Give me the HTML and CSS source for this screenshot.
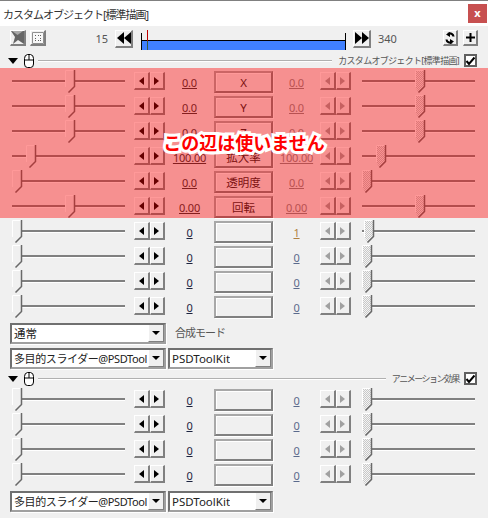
FILE: index.html
```html
<!DOCTYPE html>
<html lang="ja">

<head>
    <meta charset="UTF-8">
    <title>カスタムオブジェクト[標準描画]</title>
    <link rel="stylesheet" href="styles.css">
</head>

<body>
    <svg class="defs" width="0" height="0">
        <pattern id="dots" width="2" height="2" patternUnits="userSpaceOnUse">
            <rect width="2" height="2" fill="#f4f4f4"/>
            <rect width="1" height="1" fill="#c8c8c8"/>
            <rect x="1" y="1" width="1" height="1" fill="#c8c8c8"/>
        </pattern>
        <symbol id="thumb" viewBox="0 0 11 23">
            <path d="M1 .5H9.500V16.500L3.500 22.500L.5 17.500V.5Z" fill="#f0f0f0"/>
            <path d="M.5 17V.5H9" fill="none" stroke="#fff"/>
            <path d="M9.500 0V16.500L3.500 22.500" fill="none" stroke="#696969" stroke-width="1.500"/>
        </symbol>
        <symbol id="thumb-off" viewBox="0 0 11 23">
            <path d="M1 .5H9.500V16.500L3.500 22.500L.5 17.500V.5Z" fill="url(#dots)"/>
            <path d="M.5 17V.5H9" fill="none" stroke="#fff"/>
            <path d="M9.500 0V16.500L3.500 22.500" fill="none" stroke="#696969" stroke-width="1.500"/>
        </symbol>
        <symbol id="mouse" viewBox="0 0 10 14">
            <path d="M.5 4.500Q.5 1 3.500 .5H6.500Q9.500 1 9.500 4.500V10Q9.500 13.500 6.500 13.500H3.500Q.5 13.500 .5 10ZM.5 6H9.500M5 .5V6" fill="#fff" stroke="#000"/>
        </symbol>
    </svg>

    <div class="window">
        <div class="titlebar">
            <span class="title">カスタムオブジェクト[標準描画]</span>
            <span class="close">x</span>
        </div>

        <div class="toolbar">
            <button class="btn tool-btn">
                <svg width="13" height="13" viewBox="0 0 13 13"><path d="M0 0H13V13L7 9L2 13L4 6Z" fill="#666"/><path d="M1 0L6.500 4L12 0Z" fill="#aaa"/></svg>
            </button>
            <button class="btn tool-btn gap">
                <svg width="12" height="12" viewBox="0 0 12 12"><path d="M.5 .5H11.500V11.500H.5Z" fill="#f8f8f8" stroke="#909090"/><path d="M3 3H4V4H3ZM6 3H7V4H6ZM8 3H9V4H8ZM3 6H4V7H3ZM8 6H9V7H8ZM3 8H4V9H3ZM6 8H7V9H6ZM8 8H9V9H8Z" fill="#606060"/></svg>
            </button>
            <span class="frame frame-start">15</span>
            <button class="btn seek seek-back"><i class="tri-l"></i><i class="tri-l"></i></button>
            <div class="timeline">
                <div class="timeline-bar"></div>
                <div class="timeline-cursor"></div>
            </div>
            <button class="btn seek seek-next"><i class="tri-r"></i><i class="tri-r"></i></button>
            <span class="frame frame-end">340</span>
            <button class="btn tool-btn small">
                <svg width="10" height="12" viewBox="0 0 10 12"><path d="M8.500 4.500A3.500 3.500 0 0 0 3 2M1.500 7.500A3.500 3.500 0 0 0 7 10" fill="none" stroke="#000" stroke-width="2.200"/><path d="M5 0V5L1 2.500ZM5 7V12L9 9.500Z"/></svg>
            </button>
            <button class="btn tool-btn small gap-wide">
                <svg width="9" height="9" viewBox="0 0 9 9"><path d="M3.500 0H5.500V3.500H9V5.500H5.500V9H3.500V5.500H0V3.500H3.500Z"/></svg>
            </button>
        </div>

        <div class="section-head">
            <i class="tri-d"></i>
            <svg class="mouse" width="10" height="14"><use href="#mouse"/></svg>
            <span class="section-line"></span>
            <span class="section-name">カスタムオブジェクト[標準描画]</span>
            <span class="check">
                <svg width="11" height="10" viewBox="0 0 11 10"><path d="M1.500 5L4 8L9.500 1.500" fill="none" stroke="#000" stroke-width="2"/></svg>
            </span>
        </div>

        <div class="row">
            <div class="slider"><svg class="thumb" style="left:53px" width="11" height="23"><use href="#thumb"/></svg></div>
            <div class="spin"><button class="btn"><i class="arr-l"></i></button><button class="btn"><i class="arr-r"></i></button></div>
            <a class="val">0.0</a>
            <button class="btn name">X</button>
            <a class="val val-r">0.0</a>
            <div class="spin off"><button class="btn"><i class="arr-l"></i></button><button class="btn"><i class="arr-r"></i></button></div>
            <div class="slider"><svg class="thumb" style="left:53px" width="11" height="23"><use href="#thumb-off"/></svg></div>
        </div>
        <div class="row">
            <div class="slider"><svg class="thumb" style="left:53px" width="11" height="23"><use href="#thumb"/></svg></div>
            <div class="spin"><button class="btn"><i class="arr-l"></i></button><button class="btn"><i class="arr-r"></i></button></div>
            <a class="val">0.0</a>
            <button class="btn name">Y</button>
            <a class="val val-r">0.0</a>
            <div class="spin off"><button class="btn"><i class="arr-l"></i></button><button class="btn"><i class="arr-r"></i></button></div>
            <div class="slider"><svg class="thumb" style="left:53px" width="11" height="23"><use href="#thumb-off"/></svg></div>
        </div>
        <div class="row">
            <div class="slider"><svg class="thumb" style="left:53px" width="11" height="23"><use href="#thumb"/></svg></div>
            <div class="spin"><button class="btn"><i class="arr-l"></i></button><button class="btn"><i class="arr-r"></i></button></div>
            <a class="val">0.0</a>
            <button class="btn name">Z</button>
            <a class="val val-r">0.0</a>
            <div class="spin off"><button class="btn"><i class="arr-l"></i></button><button class="btn"><i class="arr-r"></i></button></div>
            <div class="slider"><svg class="thumb" style="left:53px" width="11" height="23"><use href="#thumb-off"/></svg></div>
        </div>
        <div class="row">
            <div class="slider"><svg class="thumb" style="left:14px" width="11" height="23"><use href="#thumb"/></svg></div>
            <div class="spin"><button class="btn"><i class="arr-l"></i></button><button class="btn"><i class="arr-r"></i></button></div>
            <a class="val">100.00</a>
            <button class="btn name">拡大率</button>
            <a class="val val-r">100.00</a>
            <div class="spin off"><button class="btn"><i class="arr-l"></i></button><button class="btn"><i class="arr-r"></i></button></div>
            <div class="slider"><svg class="thumb" style="left:14px" width="11" height="23"><use href="#thumb-off"/></svg></div>
        </div>
        <div class="row">
            <div class="slider"><svg class="thumb" style="left:0" width="11" height="23"><use href="#thumb"/></svg></div>
            <div class="spin"><button class="btn"><i class="arr-l"></i></button><button class="btn"><i class="arr-r"></i></button></div>
            <a class="val">0.0</a>
            <button class="btn name">透明度</button>
            <a class="val val-r">0.0</a>
            <div class="spin off"><button class="btn"><i class="arr-l"></i></button><button class="btn"><i class="arr-r"></i></button></div>
            <div class="slider"><svg class="thumb" style="left:0" width="11" height="23"><use href="#thumb-off"/></svg></div>
        </div>
        <div class="row">
            <div class="slider"><svg class="thumb" style="left:53px" width="11" height="23"><use href="#thumb"/></svg></div>
            <div class="spin"><button class="btn"><i class="arr-l"></i></button><button class="btn"><i class="arr-r"></i></button></div>
            <a class="val">0.00</a>
            <button class="btn name">回転</button>
            <a class="val val-r">0.00</a>
            <div class="spin off"><button class="btn"><i class="arr-l"></i></button><button class="btn"><i class="arr-r"></i></button></div>
            <div class="slider"><svg class="thumb" style="left:53px" width="11" height="23"><use href="#thumb-off"/></svg></div>
        </div>
        <div class="row">
            <div class="slider"><svg class="thumb" style="left:0" width="11" height="23"><use href="#thumb"/></svg></div>
            <div class="spin"><button class="btn"><i class="arr-l"></i></button><button class="btn"><i class="arr-r"></i></button></div>
            <a class="val val-link">0</a>
            <button class="btn name"></button>
            <a class="val val-one">1</a>
            <div class="spin off"><button class="btn"><i class="arr-l"></i></button><button class="btn"><i class="arr-r"></i></button></div>
            <div class="slider"><svg class="thumb" style="left:2px" width="11" height="23"><use href="#thumb-off"/></svg></div>
        </div>
        <div class="row">
            <div class="slider"><svg class="thumb" style="left:0" width="11" height="23"><use href="#thumb"/></svg></div>
            <div class="spin"><button class="btn"><i class="arr-l"></i></button><button class="btn"><i class="arr-r"></i></button></div>
            <a class="val val-link">0</a>
            <button class="btn name"></button>
            <a class="val val-link-r">0</a>
            <div class="spin off"><button class="btn"><i class="arr-l"></i></button><button class="btn"><i class="arr-r"></i></button></div>
            <div class="slider"><svg class="thumb" style="left:0" width="11" height="23"><use href="#thumb-off"/></svg></div>
        </div>
        <div class="row">
            <div class="slider"><svg class="thumb" style="left:0" width="11" height="23"><use href="#thumb"/></svg></div>
            <div class="spin"><button class="btn"><i class="arr-l"></i></button><button class="btn"><i class="arr-r"></i></button></div>
            <a class="val val-link">0</a>
            <button class="btn name"></button>
            <a class="val val-link-r">0</a>
            <div class="spin off"><button class="btn"><i class="arr-l"></i></button><button class="btn"><i class="arr-r"></i></button></div>
            <div class="slider"><svg class="thumb" style="left:0" width="11" height="23"><use href="#thumb-off"/></svg></div>
        </div>
        <div class="row">
            <div class="slider"><svg class="thumb" style="left:0" width="11" height="23"><use href="#thumb"/></svg></div>
            <div class="spin"><button class="btn"><i class="arr-l"></i></button><button class="btn"><i class="arr-r"></i></button></div>
            <a class="val val-link">0</a>
            <button class="btn name"></button>
            <a class="val val-link-r">0</a>
            <div class="spin off"><button class="btn"><i class="arr-l"></i></button><button class="btn"><i class="arr-r"></i></button></div>
            <div class="slider"><svg class="thumb" style="left:0" width="11" height="23"><use href="#thumb-off"/></svg></div>
        </div>

        <div class="combo-row first">
            <div class="combo combo-wide"><span class="combo-text">通常</span><span class="combo-drop"><i class="arr-d"></i></span></div>
            <span class="combo-label">合成モード</span>
        </div>
        <div class="combo-row">
            <div class="combo combo-wide"><span class="combo-text combo-long">多目的スライダー@PSDTool</span><span class="combo-drop"><i class="arr-d"></i></span></div>
            <div class="combo combo-small"><span class="combo-text">PSDToolKit</span><span class="combo-drop"><i class="arr-d"></i></span></div>
        </div>

        <div class="section-head">
            <i class="tri-d"></i>
            <svg class="mouse" width="10" height="14"><use href="#mouse"/></svg>
            <span class="section-line"></span>
            <span class="section-name kana">アニメーション効果</span>
            <span class="check">
                <svg width="11" height="10" viewBox="0 0 11 10"><path d="M1.500 5L4 8L9.500 1.500" fill="none" stroke="#000" stroke-width="2"/></svg>
            </span>
        </div>

        <div class="row">
            <div class="slider"><svg class="thumb" style="left:0" width="11" height="23"><use href="#thumb"/></svg></div>
            <div class="spin"><button class="btn"><i class="arr-l"></i></button><button class="btn"><i class="arr-r"></i></button></div>
            <a class="val val-link">0</a>
            <button class="btn name"></button>
            <a class="val val-link-r">0</a>
            <div class="spin off"><button class="btn"><i class="arr-l"></i></button><button class="btn"><i class="arr-r"></i></button></div>
            <div class="slider"><svg class="thumb" style="left:0" width="11" height="23"><use href="#thumb-off"/></svg></div>
        </div>
        <div class="row">
            <div class="slider"><svg class="thumb" style="left:0" width="11" height="23"><use href="#thumb"/></svg></div>
            <div class="spin"><button class="btn"><i class="arr-l"></i></button><button class="btn"><i class="arr-r"></i></button></div>
            <a class="val val-link">0</a>
            <button class="btn name"></button>
            <a class="val val-link-r">0</a>
            <div class="spin off"><button class="btn"><i class="arr-l"></i></button><button class="btn"><i class="arr-r"></i></button></div>
            <div class="slider"><svg class="thumb" style="left:0" width="11" height="23"><use href="#thumb-off"/></svg></div>
        </div>
        <div class="row">
            <div class="slider"><svg class="thumb" style="left:0" width="11" height="23"><use href="#thumb"/></svg></div>
            <div class="spin"><button class="btn"><i class="arr-l"></i></button><button class="btn"><i class="arr-r"></i></button></div>
            <a class="val val-link">0</a>
            <button class="btn name"></button>
            <a class="val val-link-r">0</a>
            <div class="spin off"><button class="btn"><i class="arr-l"></i></button><button class="btn"><i class="arr-r"></i></button></div>
            <div class="slider"><svg class="thumb" style="left:0" width="11" height="23"><use href="#thumb-off"/></svg></div>
        </div>
        <div class="row">
            <div class="slider"><svg class="thumb" style="left:0" width="11" height="23"><use href="#thumb"/></svg></div>
            <div class="spin"><button class="btn"><i class="arr-l"></i></button><button class="btn"><i class="arr-r"></i></button></div>
            <a class="val val-link">0</a>
            <button class="btn name"></button>
            <a class="val val-link-r">0</a>
            <div class="spin off"><button class="btn"><i class="arr-l"></i></button><button class="btn"><i class="arr-r"></i></button></div>
            <div class="slider"><svg class="thumb" style="left:0" width="11" height="23"><use href="#thumb-off"/></svg></div>
        </div>

        <div class="combo-row">
            <div class="combo combo-wide"><span class="combo-text combo-long">多目的スライダー@PSDTool</span><span class="combo-drop"><i class="arr-d"></i></span></div>
            <div class="combo combo-small"><span class="combo-text">PSDToolKit</span><span class="combo-drop"><i class="arr-d"></i></span></div>
        </div>

        <!-- Red mask over the rows that are not used -->
        <div class="mask"><span class="mask-text">この辺は使いません</span></div>
    </div>
</body>

</html>
```

FILE: styles.css
```css
* {
    margin: 0;
    padding: 0;
    box-sizing: border-box;
}

html, body {
    width: 488px;
    height: 518px;
    overflow: hidden;
    background: #f0f0f0;
}

.defs {
    position: absolute;
}

.window {
    position: relative;
    width: 488px;
    height: 518px;
    background: #f0f0f0;
    border-top: 1px solid #808080;
    font-family: "Noto Sans", "Noto Sans CJK JP", sans-serif;
    font-size: 12px;
    color: #222;
    overflow: hidden;
}

i {
    display: block;
}

/* Title bar */
.titlebar {
    height: 25px;
    background: #fff;
    display: flex;
    align-items: center;
    justify-content: space-between;
    padding: 0 1px 0 3px;
}

.title {
    font-size: 11px;
    letter-spacing: -1px;
    color: #333;
}

.close {
    width: 19px;
    height: 19px;
    margin-bottom: 1px;
    background: #c75050;
    color: #fff;
    font-weight: 700;
    font-size: 11px;
    line-height: 17px;
    text-align: center;
}

/* 3D button */
.btn {
    display: flex;
    align-items: center;
    justify-content: center;
    background: #f0f0f0;
    border-style: solid;
    border-width: 1px 2px 2px 1px;
    border-color: #fff #808080 #808080 #fff;
    font-family: inherit;
    color: #000;
}

/* Toolbar */
.toolbar {
    height: 26px;
    display: flex;
    align-items: center;
    padding-left: 10px;
}

.tool-btn {
    width: 16px;
    height: 16px;
    flex: none;
    margin-top: -2px;
}

.tool-btn svg {
    flex: none;
}

.tool-btn.small {
    width: 15px;
}

.tool-btn.gap {
    margin-left: 4px;
}

.tool-btn.gap-wide {
    margin-left: 5px;
}

.frame {
    flex: none;
    font-size: 11px;
    color: #555;
    margin-top: -2px;
}

.frame-start {
    width: 62px;
    text-align: right;
}

.frame-end {
    width: 65px;
    margin-left: 7px;
}

.seek {
    width: 18px;
    height: 18px;
    flex: none;
    margin-top: -1px;
}

.seek-back,
.seek-next {
    margin-left: 7px;
}

.tri-l {
    border-style: solid;
    border-width: 6px 7px 6px 0;
    border-color: transparent #000 transparent transparent;
}

.tri-r {
    border-style: solid;
    border-width: 6px 0 6px 7px;
    border-color: transparent transparent transparent #000;
}

.timeline {
    position: relative;
    width: 205px;
    height: 20px;
    margin-left: 8px;
    margin-top: 2px;
    flex: none;
    display: flex;
    align-items: flex-end;
}

.timeline-bar {
    width: 100%;
    height: 17px;
    border-left: 1px solid #000;
    border-right: 1px solid #000;
    background: linear-gradient(#f0f0f0 0 7px, #000 7px 8px, #4080ff 8px);
}

.timeline-cursor {
    position: absolute;
    left: 6px;
    top: 0;
    width: 1px;
    height: 20px;
    background: linear-gradient(#c00000 0 11px, #3a5a40 11px);
}

/* Section header */
.section-head {
    height: 17px;
    display: flex;
    align-items: center;
    padding-left: 8px;
}

.tri-d {
    border-style: solid;
    border-width: 6px 5.500px 0;
    border-color: #000 transparent transparent;
    flex: none;
}

.mouse {
    margin-left: 6px;
    flex: none;
}

.section-line {
    flex: 1;
    height: 2px;
    margin: 0 6px 0 4px;
    background: #b0b0b0;
    border-bottom: 1px solid #fff;
}

.section-name {
    font-size: 9px;
    letter-spacing: -0.7px;
    color: #555;
    white-space: nowrap;
}

.section-name.kana {
    letter-spacing: -1.5px;
}

.check {
    width: 13px;
    height: 13px;
    margin: 0 11px 0 5px;
    background: #fff;
    border: 2px solid #606060;
    display: flex;
    align-items: center;
    justify-content: center;
    flex: none;
}

.check svg {
    flex: none;
}

/* Parameter rows */
.row {
    height: 25px;
    display: grid;
    grid-template-columns: 113px 40px 49px 59px 47px 42px 113px;
    align-items: center;
    padding-left: 12px;
}

.slider {
    position: relative;
    height: 3px;
    background: #808080;
    border-bottom: 1px solid #fff;
}

.spin {
    display: flex;
    width: 31px;
    height: 18px;
    margin-top: -1px;
    justify-self: end;
}

.spin.off {
    justify-self: start;
}

.spin .btn {
    width: 16px;
    height: 18px;
}

.arr-l {
    border-style: solid;
    border-width: 4.500px 5px 4.500px 0;
    border-color: transparent #000 transparent transparent;
}

.arr-r {
    border-style: solid;
    border-width: 4.500px 0 4.500px 5px;
    border-color: transparent transparent transparent #000;
}

.off .arr-l {
    border-right-color: #a0a0a0;
}

.off .arr-r {
    border-left-color: #a0a0a0;
}

.thumb {
    position: absolute;
    top: -10px;
}

.val {
    text-align: center;
    text-decoration: underline;
    color: #333;
    font-size: 11px;
    letter-spacing: -0.2px;
    margin-top: 1px;
}

.val-r {
    color: #888;
}

.val-link {
    color: #1c2440;
}

.val-link-r {
    color: #5a6a8c;
}

.val-one {
    color: #b08040;
}

.name {
    height: 22px;
    width: 59px;
    margin-top: 1px;
    font-size: 11.500px;
    color: #222;
    border-width: 2px;
    border-color: #a8a8a8 #808080 #808080 #a8a8a8;
    box-shadow: inset 1px 1px 0 #fff, 1px 1px 0 #fff;
}

/* Dropdowns */
.combo-row {
    height: 22px;
    margin-top: 4px;
    display: flex;
    gap: 2px;
    padding-left: 10px;
    align-items: stretch;
}

.combo-row.first {
    height: 21px;
    align-items: center;
    gap: 9px;
}

.combo {
    height: 21px;
    display: flex;
    align-items: stretch;
    justify-content: space-between;
    background: #fff;
    border-style: solid;
    border-width: 2px;
    border-color: #707070 #a0a0a0 #a0a0a0 #707070;
    box-shadow: 1px 1px 0 #fff;
    overflow: hidden;
}

.combo-wide {
    width: 156px;
}

.combo-small {
    width: 105px;
}

.combo-text {
    padding-left: 2px;
    line-height: 17px;
    font-size: 11.500px;
    color: #222;
    white-space: nowrap;
    overflow: hidden;
}

.combo-long {
    font-size: 11px;
    letter-spacing: -0.4px;
}

.combo-drop {
    width: 16px;
    flex: none;
    background: #f0f0f0;
    border-right: 1px solid #808080;
    border-bottom: 1px solid #808080;
    border-left: 1px solid #fff;
    display: flex;
    align-items: center;
    justify-content: center;
}

.arr-d {
    border-style: solid;
    border-width: 4px 4px 0;
    border-color: #000 transparent transparent;
}

.combo-label {
    font-size: 11px;
    letter-spacing: -1px;
    color: #555;
    margin-top: -4px;
}

/* Mask */
.mask {
    position: absolute;
    left: 0;
    top: 67px;
    width: 488px;
    height: 150px;
    background: rgba(255, 0, 0, 0.4);
    display: flex;
    align-items: center;
    justify-content: center;
}

.mask-text {
    font-family: "Noto Sans CJK JP", sans-serif;
    font-weight: 700;
    font-size: 18px;
    color: #f00;
    paint-order: stroke;
    -webkit-text-stroke: 6px #fff;
    text-shadow: 0 0 2px #fff, 0 0 3px #fff;
    margin-bottom: 3px;
}
```
